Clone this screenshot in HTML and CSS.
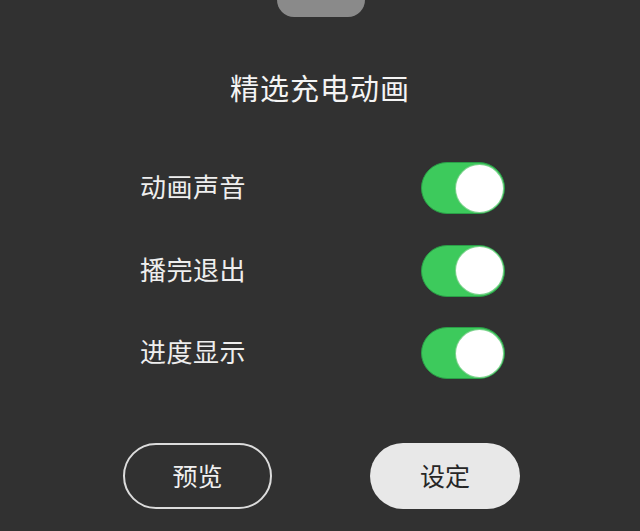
FILE: index.html
```html
<!DOCTYPE html>
<html lang="zh">
<head>
<meta charset="utf-8">
<title>精选充电动画</title>
<link rel="stylesheet" href="styles.css">
</head>
<body>
<div class="sheet">
  <div class="handle"></div>
  <h1 class="title">精选充电动画</h1>
  <div class="options">
    <div class="row"><span class="label">动画声音</span><span class="switch"><span class="knob"></span></span></div>
    <div class="row"><span class="label">播完退出</span><span class="switch"><span class="knob"></span></span></div>
    <div class="row"><span class="label">进度显示</span><span class="switch"><span class="knob"></span></span></div>
  </div>
  <div class="actions">
    <button class="btn btn-outline">预览</button>
    <button class="btn btn-fill">设定</button>
  </div>
</div>
</body>
</html>
```
FILE: styles.css
```css
html, body {
  margin: 0;
  padding: 0;
  background: #313131;
}
body {
  width: 640px;
  height: 531px;
  overflow: hidden;
  font-family: "Noto Sans CJK SC", "Noto Sans", sans-serif;
}
.sheet {
  display: flex;
  flex-direction: column;
  align-items: stretch;
}
.handle {
  align-self: center;
  width: 88px;
  height: 34px;
  margin-top: -17px;
  margin-left: 2px;
  border-radius: 17px;
  background: #8a8a8a;
}
.title {
  margin: 52px 0 0;
  height: 36px;
  line-height: 36px;
  text-align: center;
  font-size: 29px;
  font-weight: 400;
  color: #f4f4f4;
  letter-spacing: 1px;
}
.options {
  margin-top: 57px;
  padding: 0 135px 0 140px;
  display: flex;
  flex-direction: column;
  gap: 30.5px;
}
.row {
  height: 52px;
  display: flex;
  align-items: center;
  justify-content: space-between;
}
.label {
  font-size: 26px;
  color: #eeeeee;
  padding-bottom: 5px;
  letter-spacing: 0.5px;
}
.switch {
  width: 84px;
  height: 52px;
  box-sizing: border-box;
  border-radius: 26px;
  background: #3dca5c;
  border: 1.5px solid #2a9e47;
  display: flex;
  align-items: center;
  justify-content: flex-end;
  padding-right: 1px;
}
.knob {
  width: 47px;
  height: 47px;
  border-radius: 50%;
  background: #ffffff;
  box-shadow: 0 0 0 1px #7fd28f;
}
.actions {
  margin-top: 64px;
  padding: 0 120px 0 123px;
  display: flex;
  justify-content: space-between;
}
.btn {
  width: 149px;
  height: 66px;
  border-radius: 33px;
  font-family: "Noto Sans CJK SC", "Noto Sans", sans-serif;
  font-size: 25px;
  padding: 0 0 3px;
  cursor: pointer;
}
.btn-outline {
  background: transparent;
  border: 2px solid #dcdcdc;
  color: #f0f0f0;
}
.btn-fill {
  width: 150px;
  background: #e8e8e8;
  border: none;
  color: #262626;
}
```
